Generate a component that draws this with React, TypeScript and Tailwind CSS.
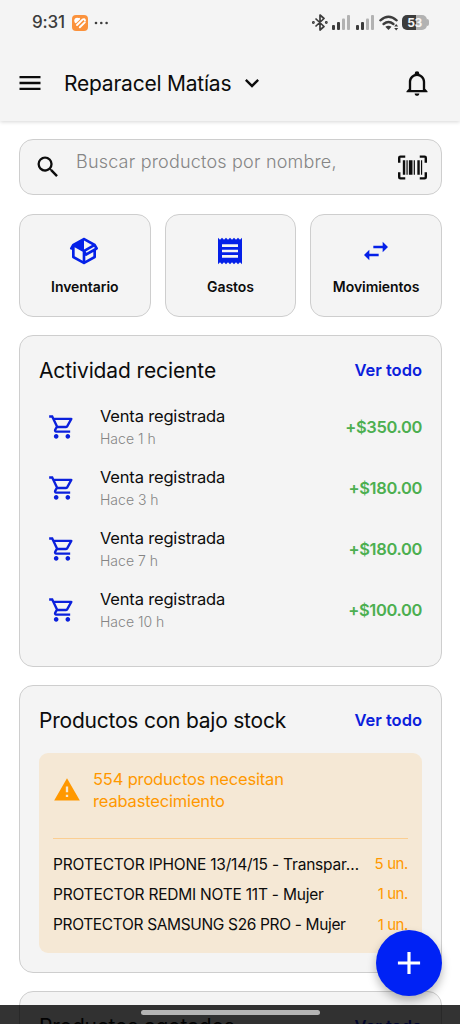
import type { ReactNode } from "react"
import { MdAdd, MdKeyboardArrowDown, MdMenu, MdOutlineShoppingCart, MdSearch } from "react-icons/md"

const packagePath =
  "M2 10.96a.985.985 0 0 1-.37-1.37L3.13 7c.11-.2.28-.34.47-.42l7.83-4.4c.16-.12.36-.18.57-.18s.41.06.57.18l7.9 4.44c.19.1.35.26.44.46l1.45 2.52c.28.48.11 1.09-.36 1.36l-1 .58v4.96c0 .38-.21.71-.53.88l-7.9 4.44c-.16.12-.36.18-.57.18s-.41-.06-.57-.18l-7.9-4.44A.99.99 0 0 1 3 16.5v-5.54c-.3.17-.68.18-1 0m10-6.81v6.7l5.96-3.35zM5 15.91l6 3.38v-6.71L5 9.21zm14 0v-3.22l-5 2.9c-.33.18-.7.17-1 .01v3.69zm-5.15-2.55 6.28-3.63-.58-1.01-6.28 3.63z"
const receiptPath =
  "M3 22l1.5-1.5L6 22l1.5-1.5L9 22l1.5-1.5L12 22l1.5-1.5L15 22l1.5-1.5L18 22l1.5-1.5L21 22V2l-1.5 1.5L18 2l-1.5 1.5L15 2l-1.5 1.5L12 2l-1.5 1.5L9 2 7.5 3.5 6 2 4.5 3.5 3 2zM18 9H6V7h12zm0 4H6v-2h12zm0 4H6v-2h12z"
const swapPath = "m21 9-4-4v3h-7v2h7v3zM7 11l-4 4 4 4v-3h7v-2H7z"
const barcodePath =
  "M4 6h2v12H4zm3 0h1v12H7zm2 0h3v12H9zm4 0h1v12h-1zm3 0h2v12h-2zm3 0h1v12h-1zM2 4v4H0V4a2 2 0 0 1 2-2h4v2zm20-2a2 2 0 0 1 2 2v4h-2V4h-4V2zM2 16v4h4v2H2a2 2 0 0 1-2-2v-4zm20 4v-4h2v4a2 2 0 0 1-2 2h-4v-2z"
const bellPath =
  "M10 21h4c0 1.1-.9 2-2 2s-2-.9-2-2m11-2v1H3v-1l2-2v-6c0-3.1 2.03-5.83 5-6.71V4a2 2 0 0 1 2-2 2 2 0 0 1 2 2v.29c2.97.88 5 3.61 5 6.71v6zm-4-8a5 5 0 0 0-5-5 5 5 0 0 0-5 5v7h10z"
const alertPath = "M13 14h-2V9h2zm0 4h-2v-2h2zM1 21h22L12 2z"

const shortcuts = [
  { label: "Inventario", path: packagePath },
  { label: "Gastos", path: receiptPath },
  { label: "Movimientos", path: swapPath },
]

const sales = [
  { time: "Hace 1 h", amount: "+$350.00" },
  { time: "Hace 3 h", amount: "+$180.00" },
  { time: "Hace 7 h", amount: "+$180.00" },
  { time: "Hace 10 h", amount: "+$100.00" },
]

const lowStock = [
  { name: "PROTECTOR IPHONE 13/14/15 - Transpar…", units: "5 un.", tracking: "tracking-[-0.19px]" },
  { name: "PROTECTOR REDMI NOTE 11T - Mujer", units: "1 un.", tracking: "tracking-[-0.22px]" },
  { name: "PROTECTOR SAMSUNG S26 PRO - Mujer", units: "1 un.", tracking: "tracking-[-0.35px]" },
]

function Icon({ path, className }: { path: string; className: string }) {
  return (
    <svg className={className} viewBox="0 0 24 24" fill="currentColor">
      <path d={path} />
    </svg>
  )
}

function Signal() {
  return (
    <svg width="19" height="15" viewBox="0 0 19 15">
      <rect x="0" y="10" width="3" height="5" rx="1" fill="#3c3c3c" />
      <rect x="5" y="7" width="3" height="8" rx="1" fill="#3c3c3c" />
      <rect x="10" y="3.5" width="3" height="11.5" rx="1" fill="#b2b2b2" />
      <rect x="15" y="0" width="3" height="15" rx="1" fill="#b2b2b2" />
    </svg>
  )
}

function StatusBar() {
  return (
    <div className="flex h-[45px] items-center pl-8 pr-[31px] text-[#3c3c3c]">
      <span className="text-[17px] font-medium tracking-[-0.2px]">9:31</span>
      <svg className="ml-[7px]" width="16" height="16" viewBox="0 0 16 16">
        <rect width="16" height="16" rx="4" fill="#fb923c" />
        <g fill="none" stroke="#fff" strokeWidth="1.9" strokeLinecap="round" strokeLinejoin="round">
          <path d="M3.6 7.2 7.2 3.8M3.2 6.2Q2.8 3.6 5.4 3.7" />
          <path d="M5 10 10.5 4.6Q12.6 3.3 13 5.6" />
          <path d="M7.8 12.3 12.8 7.4" />
        </g>
      </svg>
      <svg className="ml-1.5" width="15" height="4" viewBox="0 0 15 4" fill="#3c3c3c">
        <circle cx="2" cy="2" r="1.3" />
        <circle cx="7.3" cy="2" r="1.3" />
        <circle cx="12.6" cy="2" r="1.3" />
      </svg>

      <div className="ml-auto flex items-center">
        <svg width="16" height="17" viewBox="0 0 16 17" fill="none" stroke="#3c3c3c" strokeWidth="1.7">
          <path d="m3.5 4.5 8.5 8L8 16V1l4 3.5-8.500 8" strokeLinejoin="round" />
          <circle cx="1.4" cy="8.5" r=".6" />
          <circle cx="14.3" cy="8.5" r=".6" />
        </svg>
        <div className="ml-1 flex gap-[5px]">
          <Signal />
          <Signal />
        </div>
        <svg className="ml-1" width="20" height="16" viewBox="0 0 20 16" fill="none" stroke="#3c3c3c" strokeWidth="2.4">
          <path d="M1.4 5.3Q9.5-1.6 17.6 5.3M4.6 9Q9.5 5 14.4 9" strokeLinecap="round" />
          <path d="M6.3 11.7Q9.5 9.7 12.5 11.7L9.5 15Z" fill="#3c3c3c" stroke="none" />
          <path d="M17.2 9 19.2 11.5h-4ZM17.2 15.5 19.2 13h-4Z" fill="#3c3c3c" stroke="none" />
        </svg>
        <div className="ml-[3px] flex h-[15px] w-[25px] items-center justify-center rounded-[5px] bg-[linear-gradient(90deg,#3c3c3c_57%,#b2b2b2_57%)] text-[12px] font-bold tracking-[-0.5px] text-[#f4f4f4]">
          53
        </div>
        <div className="h-[7px] w-[2px] rounded-r-full bg-[#b2b2b2]" />
      </div>
    </div>
  )
}

function Section({ title, titleClass, className, children }: {
  title: string
  titleClass: string
  className: string
  children?: ReactNode
}) {
  return (
    <section className={`rounded-[14px] border border-[#cecece] bg-[#f4f4f4] px-[19px] ${className}`}>
      <div className="flex h-[70px] items-center justify-between">
        <h2 className={`whitespace-nowrap text-[21px] ${titleClass}`}>{title}</h2>
        <a className="mb-[2px] whitespace-nowrap text-[16.5px] font-semibold text-[#0b20dc]">Ver todo</a>
      </div>
      {children}
    </section>
  )
}

export default function App() {
  return (
    <div className="relative h-[1024px] w-[460px] overflow-hidden bg-white font-['Inter','Noto_Sans',sans-serif] text-[#0c0c0c]">
      <header className="relative h-[121px] bg-[#f4f4f4] shadow-[0_1px_4px_rgba(0,0,0,0.16)]">
        <StatusBar />
        <div className="flex h-[76px] items-center pl-4 pr-[29px]">
          <MdMenu className="size-7" />
          <h1 className="ml-5 mt-[2px] whitespace-nowrap text-[21px] tracking-[-0.22px]">Reparacel Matías</h1>
          <MdKeyboardArrowDown className="ml-[7px] size-7" />
          <Icon path={bellPath} className="ml-auto size-7" />
        </div>
      </header>

      <main className="flex flex-col pl-[19px] pr-[18px] pt-[18px]">
        <div className="flex h-[56px] items-center rounded-[14px] border border-[#cecece] bg-[#f4f4f4] px-[14px]">
          <MdSearch className="size-7" />
          <span className="mb-[11px] ml-[14px] whitespace-nowrap text-[18px] font-light tracking-[0.2px] text-[#858585]">
            Buscar productos por nombre,
          </span>
          <Icon path={barcodePath} className="ml-auto size-[29px]" />
        </div>

        <div className="mt-[19px] grid grid-cols-3 gap-[14px]">
          {shortcuts.map((item) => (
            <button
              key={item.label}
              className="flex h-[103px] flex-col items-center rounded-[14px] border border-[#cecece] bg-[#f4f4f4] pt-[20px]"
            >
              <Icon path={item.path} className="mr-px size-8 text-[#0420e8]" />
              <span className="mt-[10px] text-[14px] font-semibold leading-5 tracking-[-0.05px]">{item.label}</span>
            </button>
          ))}
        </div>

        <Section title="Actividad reciente" titleClass="tracking-[-0.12px]" className="mt-[18px] h-[332px]">
          <div className="-mt-[9px]">
            {sales.map((sale) => (
              <div key={sale.time} className="flex h-[61px] items-center">
                <MdOutlineShoppingCart className="mb-[2px] ml-[9px] size-7 text-[#0b20dc]" />
                <div className="ml-[24px]">
                  <p className="whitespace-nowrap text-[16.5px] leading-[23px] tracking-[-0.18px]">Venta registrada</p>
                  <p className="text-[14px] font-light leading-[22px] text-[#858585]">{sale.time}</p>
                </div>
                <span className="ml-auto text-[16.5px] font-semibold tracking-[-0.36px] text-[#4caf50]">{sale.amount}</span>
              </div>
            ))}
          </div>
        </Section>

        <Section title="Productos con bajo stock" titleClass="tracking-[-0.22px]" className="mt-[18px] h-[288px]">
          <div className="-mt-[3px] h-[200px] rounded-[9px] bg-[#f5e8d5] px-[14px] pt-[15px]">
            <div className="flex items-center text-[#ff9800]">
              <Icon path={alertPath} className="size-7" />
              <p className="ml-3 w-[240px] text-[16.5px] leading-[22px] tracking-[-0.17px]">554 productos necesitan reabastecimiento</p>
            </div>
            <div className="mb-[10px] mt-[26px] h-px bg-[#fbce92]" />
            {lowStock.map((product) => (
              <div key={product.name} className="flex h-[30.4px] items-center justify-between whitespace-nowrap">
                <span className={`text-[15.5px] ${product.tracking}`}>{product.name}</span>
                <span className="text-[15px] tracking-[-0.4px] text-[#ff9800]">{product.units}</span>
              </div>
            ))}
          </div>
        </Section>

        <Section title="Productos agotados" titleClass="tracking-[-0.22px]" className="mt-[18px] h-[200px]" />
      </main>

      <button className="absolute bottom-[28px] right-[18px] flex size-[66px] items-center justify-center rounded-full bg-[#0022f5] text-white shadow-[0_5px_10px_rgba(0,0,0,0.28)]">
        <MdAdd className="size-[38px]" />
      </button>

      {/* system gesture bar */}
      <div className="absolute inset-x-0 bottom-0 flex h-[19px] justify-center bg-black/80 pt-[5px]">
        <div className="h-[5px] w-[179px] rounded-full bg-[#b4b4b4]" />
      </div>
    </div>
  )
}
